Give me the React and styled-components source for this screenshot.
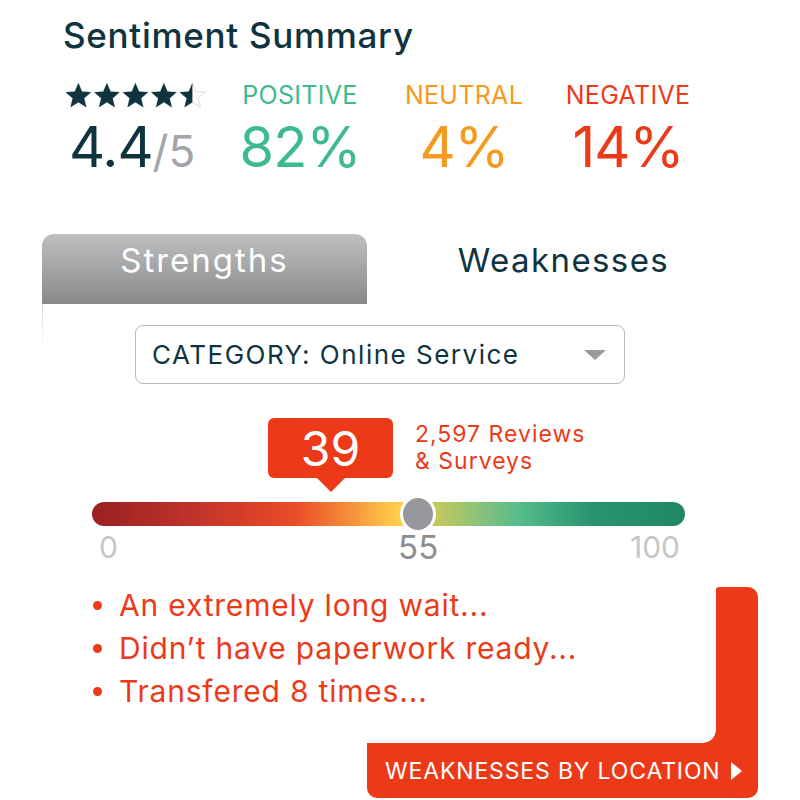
import React from 'react'
import styled, { createGlobalStyle } from 'styled-components'

const ink = '#0f3440'
const red = '#ec3a19'
const green = '#3dbb8c'
const orange = '#f7991f'

const GlobalStyle = createGlobalStyle`
  html, body {
    margin: 0;
    background: #fff;
  }
  body {
    font-family: Inter, "Noto Sans", sans-serif;
    -webkit-font-smoothing: antialiased;
  }
`

const Page = styled.div`
  width: 800px;
  height: 800px;
  overflow: hidden;
  padding: 0 40px 0 42px;
  box-sizing: border-box;
`

const Title = styled.h1`
  margin: 0;
  padding: 15px 0 0 21px;
  font-size: 35px;
  font-weight: 500;
  line-height: 40px;
  letter-spacing: 0.7px;
  color: ${ink};
`

const Stats = styled.div`
  display: grid;
  grid-template-columns: 155px repeat(3, 164px);
  margin-top: 25px;
  padding-left: 21px;
`

const RatingCol = styled.div`
  display: flex;
  flex-direction: column;
  align-items: flex-start;
`

const SentimentCol = styled.div`
  text-align: center;
  color: ${props => props.color};
`

const Label = styled.div`
  font-size: 25px;
  line-height: 30px;
  letter-spacing: 0.3px;
`

const BigValue = styled.div`
  margin-top: 7px;
  font-size: 56px;
  line-height: 60px;
  letter-spacing: -1px;
  color: ${props => props.color || 'inherit'};
`

const RatingValue = styled(BigValue)`
  margin-top: 9px;
  padding-left: 6px;
`

const OutOf = styled.span`
  font-size: 44px;
  color: #a3a4a7;
  letter-spacing: 0;
`

const Tabs = styled.div`
  display: flex;
  margin-top: 53px;
`

const Tab = styled.div`
  width: ${props => props.width}px;
  height: 70px;
  box-sizing: border-box;
  padding-top: 6px;
  text-align: center;
  font-size: 33px;
  line-height: 40px;
  letter-spacing: ${props => (props.active ? 2 : 1.4)}px;
  color: ${props => (props.active ? '#fff' : ink)};
  border-radius: 12px 12px 0 0;
  background: ${props => (props.active ? 'linear-gradient(#bebfc1, #88898b)' : 'transparent')};
`

const Panel = styled.div`
  margin-top: -12px;
  padding-top: 33px;
  border-top-left-radius: 12px;
  background: linear-gradient(to bottom, #cfcfd1, rgba(255, 255, 255, 0)) 0 0 / 1px 56px no-repeat, #fff;
`

const Dropdown = styled.div`
  margin-left: 93px;
  width: 490px;
  height: 59px;
  box-sizing: border-box;
  display: flex;
  align-items: center;
  justify-content: space-between;
  padding: 0 18px 0 16px;
  border: 1px solid #b9b9bb;
  border-radius: 8px;
  font-size: 26px;
  letter-spacing: 1.5px;
  color: ${ink};
`

const Caret = styled.span`
  width: 0;
  height: 0;
  border-left: 11px solid transparent;
  border-right: 11px solid transparent;
  border-top: 10px solid #9a9a9c;
`

const Gauge = styled.div`
  margin: 34px 0 0 50px;
  width: 593px;
`

const GaugeHead = styled.div`
  display: flex;
  align-items: flex-start;
  gap: 22px;
  padding-left: 176px;
`

const Bubble = styled.div`
  position: relative;
  width: 125px;
  height: 60px;
  display: flex;
  align-items: center;
  justify-content: center;
  background: ${red};
  border-radius: 6px;
  color: #fff;
  font-size: 48px;

  &::after {
    content: '';
    position: absolute;
    left: 50%;
    bottom: -14px;
    transform: translateX(-50%);
    border-left: 14px solid transparent;
    border-right: 14px solid transparent;
    border-top: 14px solid ${red};
  }
`

const ReviewCount = styled.div`
  padding-top: 3px;
  font-size: 23px;
  line-height: 27px;
  letter-spacing: 1px;
  color: ${red};
`

const Bar = styled.div`
  position: relative;
  margin-top: 24px;
  height: 24px;
  border-radius: 12px;
  background: linear-gradient(
    to right,
    #9a2023 0%,
    #c0332a 17%,
    #ea4a27 34%,
    #f6933a 44%,
    #fec447 50%,
    #ffd44b 53%,
    #c4c85b 58%,
    #8cc27a 65%,
    #55bc8b 72%,
    #2a9470 84%,
    #1f8766 100%
  );
`

const Knob = styled.div`
  position: absolute;
  left: ${props => props.at}%;
  top: 50%;
  transform: translate(-50%, -50%);
  width: 36px;
  height: 38px;
  box-sizing: border-box;
  border-radius: 50%;
  border: 3px solid #fff;
  background: #97989b;
`

const Ticks = styled.div`
  display: grid;
  grid-template-columns: 55fr 0 45fr;
  margin-top: 3px;
`

const Tick = styled.div`
  display: flex;
  justify-content: ${props => props.align};
  padding: ${props => props.pad || '0'};
  font-size: ${props => props.size}px;
  line-height: 36px;
  color: ${props => props.color};
`

const Footer = styled.div`
  display: grid;
  grid-template-columns: 277px 349px 42px;
  grid-template-rows: 156px 55px;
  margin: 22px 0 0 48px;
`

const Reasons = styled.ul`
  grid-column: 1 / 3;
  grid-row: 1;
  margin: -3px 0 0;
  padding: 0;
  list-style: none;
`

const Reason = styled.li`
  display: flex;
  align-items: center;
  font-size: 30px;
  line-height: 43px;
  letter-spacing: 0.8px;
  color: ${red};

  &::before {
    content: '';
    width: 9px;
    height: 9px;
    margin: 0 17px 0 3px;
    border-radius: 50%;
    background: ${red};
  }
`

const SideBar = styled.div`
  grid-column: 3;
  grid-row: 1;
  background: ${red};
  border-radius: 3px 10px 0 0;
`

const InnerCorner = styled.div`
  grid-column: 2;
  grid-row: 1;
  align-self: end;
  justify-self: end;
  width: 13px;
  height: 13px;
  background: radial-gradient(circle at 0 0, transparent 12.5px, ${red} 13px);
`

const LocationButton = styled.button`
  grid-column: 2 / 4;
  grid-row: 2;
  display: flex;
  align-items: center;
  gap: 10px;
  padding: 0 0 0 18px;
  border: none;
  border-radius: 0 0 10px 10px;
  background: ${red};
  color: #fff;
  font-family: inherit;
  font-size: 23px;
  letter-spacing: 0.85px;
  cursor: pointer;
`

const PlayArrow = styled.span`
  width: 0;
  height: 0;
  border-left: 11px solid #fff;
  border-top: 9px solid transparent;
  border-bottom: 9px solid transparent;
`

const STAR = '12,1.6 15,8.7 22.6,9.3 16.8,14.3 18.6,21.8 12,17.8 5.4,21.8 7.2,14.3 1.4,9.3 9,8.7'

const Stars = ({ value }) => (
  <svg width="146" height="28" viewBox="0 0 146 28" style={{ marginLeft: 1 }}>
    <defs>
      <clipPath id="half">
        <rect x="0" y="0" width="12" height="24" />
      </clipPath>
    </defs>
    {[0, 1, 2, 3, 4].map(i => {
      const fill = Math.min(1, Math.max(0, value - i))
      return (
        <g key={i} transform={`translate(${i * 28.5}, 1) scale(1.2)`}>
          <polygon points={STAR} fill="none" stroke="#dcdee3" strokeWidth="0.9" strokeLinejoin="round" />
          {fill > 0 && (
            <polygon
              points={STAR}
              fill={ink}
              clipPath={fill < 1 ? 'url(#half)' : undefined}
            />
          )}
        </g>
      )
    })}
  </svg>
)

const sentiments = [
  { label: 'POSITIVE', value: '82%', color: green },
  { label: 'NEUTRAL', value: '4%', color: orange },
  { label: 'NEGATIVE', value: '14%', color: red },
]

const reasons = [
  'An extremely long wait...',
  'Didn’t have paperwork ready...',
  'Transfered 8 times...',
]

const App = () => (
  <Page>
    <GlobalStyle />
    <Title>Sentiment Summary</Title>
    <Stats>
      <RatingCol>
        <Stars value={4.5} />
        <RatingValue color={ink}>
          4.4<OutOf>/5</OutOf>
        </RatingValue>
      </RatingCol>
      {sentiments.map(s => (
        <SentimentCol key={s.label} color={s.color}>
          <Label>{s.label}</Label>
          <BigValue>{s.value}</BigValue>
        </SentimentCol>
      ))}
    </Stats>

    <Tabs>
      <Tab width={325} active>Strengths</Tab>
      <Tab width={393}>Weaknesses</Tab>
    </Tabs>

    <Panel>
      <Dropdown>
        <span>CATEGORY: Online Service</span>
        <Caret />
      </Dropdown>

      <Gauge>
        <GaugeHead>
          <Bubble>39</Bubble>
          <ReviewCount>
            2,597 Reviews
            <br />
            &amp; Surveys
          </ReviewCount>
        </GaugeHead>
        <Bar>
          <Knob at={55} />
        </Bar>
        <Ticks>
          <Tick align="flex-start" pad="0 0 0 7px" size={30} color="#c5c6c8">0</Tick>
          <Tick align="center" size={33} color="#8d8e91">55</Tick>
          <Tick align="flex-end" pad="0 5px 0 0" size={30} color="#c5c6c8">100</Tick>
        </Ticks>
      </Gauge>

      <Footer>
        <Reasons>
          {reasons.map(r => (
            <Reason key={r}>{r}</Reason>
          ))}
        </Reasons>
        <InnerCorner />
        <SideBar />
        <LocationButton>
          WEAKNESSES BY LOCATION
          <PlayArrow />
        </LocationButton>
      </Footer>
    </Panel>
  </Page>
)

export default App
